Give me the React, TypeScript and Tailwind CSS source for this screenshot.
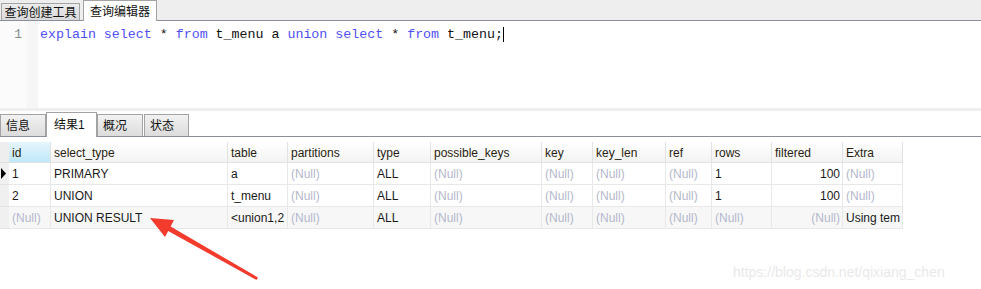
const cols = [
  { name: "id", w: 42 },
  { name: "select_type", w: 177 },
  { name: "table", w: 60 },
  { name: "partitions", w: 86 },
  { name: "type", w: 57 },
  { name: "possible_keys", w: 111 },
  { name: "key", w: 51 },
  { name: "key_len", w: 73 },
  { name: "ref", w: 46 },
  { name: "rows", w: 60 },
  { name: "filtered", w: 71 },
  { name: "Extra", w: 60 },
];

const N = null;
const rows: (string | null)[][] = [
  ["1", "PRIMARY", "a", N, "ALL", N, N, N, N, "1", "100", N],
  ["2", "UNION", "t_menu", N, "ALL", N, N, N, N, "1", "100", N],
  [N, "UNION RESULT", "<union1,2", N, "ALL", N, N, N, N, N, N, "Using tem"],
];

const kw = "text-[#4f4ff5]";

function Cell({ v, w, right }: { v: string | null; w: number; right?: boolean }) {
  return (
    <div
      style={{ width: w }}
      className={`shrink-0 h-full border-r border-b border-[#e8e8e8] overflow-hidden whitespace-nowrap flex items-center px-[3px] ${
        right ? "justify-end pr-[2px]" : ""
      }`}
    >
      {v === null ? <span className="text-[#b4b8cc]">(Null)</span> : <span className="text-[#1a1a1a]">{v}</span>}
    </div>
  );
}

export default function App() {
  return (
    <div
      className="relative w-[981px] h-[289px] bg-white overflow-hidden text-[12px]"
      style={{ fontFamily: '"Liberation Sans", "Noto Sans CJK SC", sans-serif' }}
    >
      {/* top tabs */}
      <div className="h-[21px] bg-[#eeeeee] border-b border-[#8a8f99] flex items-end">
        <div className="ml-px w-[79px] h-[17px] border border-b-0 border-[#a3a3a3] bg-gradient-to-b from-[#ececec] to-[#d9d9d9] flex items-center justify-center pt-[2px] text-[#111]">
          查询创建工具
        </div>
        <div className="ml-[3px] w-[74px] h-[21px] -mb-px border border-b-0 border-[#a3a3a3] bg-white flex items-start pt-[2px] justify-center text-[#111]">
          查询编辑器
        </div>
      </div>

      {/* editor */}
      <div className="h-[87px] flex">
        <div className="w-[27px] bg-[#fbfbfb] flex justify-end pr-[5px] pt-[6px] text-[#8a8a8a]" style={{ fontFamily: '"Liberation Mono", monospace' }}>
          <span className="text-[13px] leading-[16px]">1</span>
        </div>
        <div className="w-[11px] bg-[#f6f6f6]" />
        <div
          className="pl-[2px] pt-[6px] text-[13.3px] leading-[16px] text-[#111] whitespace-pre"
          style={{ fontFamily: '"Liberation Mono", monospace' }}
        >
          <span className={kw}>explain</span> <span className={kw}>select</span> * <span className={kw}>from</span> t_menu a{" "}
          <span className={kw}>union</span> <span className={kw}>select</span> * <span className={kw}>from</span> t_menu;
          <span className="inline-block w-px h-[15px] bg-black align-middle" />
        </div>
      </div>

      <div className="h-[3px] bg-[#efefef]" />

      {/* result tabs */}
      <div className="mt-px h-[25px] flex items-end border-b border-[#8a8f99]">
        {["信息", "结果1", "概况", "状态"].map((t, i) =>
          i === 1 ? (
            <div key={t} className="w-[51px] h-[25px] -mb-px border border-b-0 border-[#a3a3a3] bg-white flex items-start pt-[3px] pl-[7px] text-[#111]">
              {t}
            </div>
          ) : (
            <div
              key={t}
              className={`h-[22px] ${i === 3 ? "w-[45px] ml-px" : "w-[46px]"} border border-b-0 border-[#a3a3a3] bg-gradient-to-b from-[#f2f2f2] to-[#dcdcdc] flex items-center pl-[5px] pt-[1px] text-[#111]`}
            >
              {t}
            </div>
          )
        )}
      </div>

      {/* grid */}
      <div className="mt-[5px] w-[903px]">
        <div className="h-[21px] flex">
          <div className="w-[9px] h-full bg-[#eeeeee] border-b border-[#e0e0e0]" />
          {cols.map((c, i) => (
            <div
              key={c.name}
              style={{ width: c.w }}
              className={`shrink-0 h-full flex items-center pt-[1px] px-[3px] border-r border-b border-[#e2e2e2] text-[#2a1e10] ${
                i === 0 ? "bg-gradient-to-b from-[#e6f6fd] to-[#bfe7f9]" : "bg-gradient-to-b from-white to-[#f3f3f3]"
              }`}
            >
              {c.name}
            </div>
          ))}
        </div>
        {rows.map((r, ri) => (
          <div key={ri} className={`h-[22px] flex ${ri === 2 ? "bg-[#f7f7f7]" : "bg-white"}`}>
            <div className="w-[9px] h-full bg-[#f0f0f0] border-b border-[#e4e4e4] flex items-center">
              {ri === 0 && (
                <svg width="7" height="11" viewBox="0 0 7 11">
                  <path d="M1 0 L6 5.5 L1 11 Z" fill="#000" />
                </svg>
              )}
            </div>
            {r.map((v, ci) => (
              <Cell key={ci} v={v} w={cols[ci].w} right={ci === 10} />
            ))}
          </div>
        ))}
      </div>

      {/* annotation arrow */}
      <svg className="absolute left-0 top-0 pointer-events-none" width="981" height="289">
        <polygon
          points="150,218 174,220 170.6,226.5 258,277.5 256.5,280 168.2,231 165,237"
          fill="#f23b2c"
        />
      </svg>

      {/* watermark */}
      <div className="absolute left-[733px] top-[262px] text-[14px] text-[#e9e9e9]" style={{ fontFamily: '"Liberation Sans", sans-serif' }}>
        https://blog.csdn.net/qixiang_chen
      </div>
    </div>
  );
}
